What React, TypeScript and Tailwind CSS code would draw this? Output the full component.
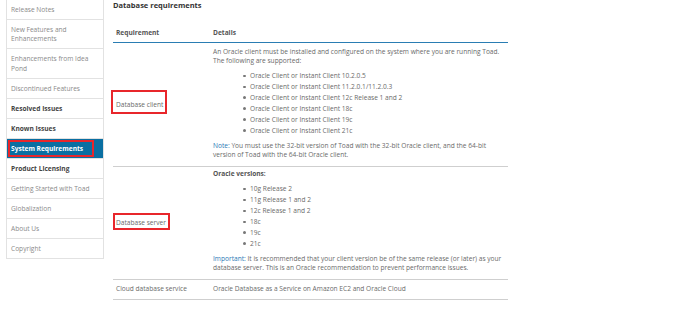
import React from "react";

const sidebar: { label: string; kind: "normal" | "bold" | "active" }[] = [
  { label: "Release Notes", kind: "normal" },
  { label: "New Features and Enhancements", kind: "normal" },
  { label: "Enhancements from Idea Pond", kind: "normal" },
  { label: "Discontinued Features", kind: "normal" },
  { label: "Resolved Issues", kind: "bold" },
  { label: "Known Issues", kind: "bold" },
  { label: "System Requirements", kind: "active" },
  { label: "Product Licensing", kind: "bold" },
  { label: "Getting Started with Toad", kind: "normal" },
  { label: "Globalization", kind: "normal" },
  { label: "About Us", kind: "normal" },
  { label: "Copyright", kind: "normal" },
];

const clientItems = [
  "Oracle Client or Instant Client 10.2.0.5",
  "Oracle Client or Instant Client 11.2.0.1/11.2.0.3",
  "Oracle Client or Instant Client 12c Release 1 and 2",
  "Oracle Client or Instant Client 18c",
  "Oracle Client or Instant Client 19c",
  "Oracle Client or Instant Client 21c",
];

const serverItems = ["10g Release 2", "11g Release 1 and 2", "12c Release 1 and 2", "18c", "19c", "21c"];

function Bullets({ items }: { items: string[] }) {
  return (
    <ul className="flex flex-col gap-[1.5px] pl-[30px]">
      {items.map((t) => (
        <li key={t} className="flex items-center">
          <span className="w-[2.5px] h-[2.5px] rounded-full bg-[#777] mr-[4.5px] shrink-0" />
          <span>{t}</span>
        </li>
      ))}
    </ul>
  );
}

export default function App() {
  return (
    <div className="w-[680px] h-[314px] bg-white overflow-hidden flex font-['Open_Sans',sans-serif] text-[6.6px] leading-[9.4px] text-[#6a6a6a]">
      <aside className="ml-[6px] w-[98px] shrink-0">
        <ul className="border-x border-[#e2e2e2]">
          {sidebar.map((s) => (
            <li
              key={s.label}
              className={
                s.kind === "active"
                  ? "relative px-[4px] py-[4.8px] border-b border-[#e2e2e2] bg-[#0a6fa2] text-white font-bold"
                  : s.kind === "bold"
                  ? "px-[4px] py-[4.8px] border-b border-[#e2e2e2] text-[#444] font-bold"
                  : "px-[4px] py-[4.8px] border-b border-[#e2e2e2] text-[#8a8a8a]"
              }
            >
              {s.label}
              {s.kind === "active" && (
                <span className="absolute left-[1px] top-[1px] w-[86px] h-[17px] border-2 border-solid border-[#e8262b]" />
              )}
            </li>
          ))}
        </ul>
      </aside>

      <main className="ml-[9px] w-[395px] shrink-0">
        <h1 className="text-[7.5px] leading-[10px] font-bold text-[#333]">Database requirements</h1>

        <div className="mt-[18px] flex pb-[5px] border-b-[1.5px] border-[#2a7db3] font-bold text-[#555]">
          <div className="w-[97px] pl-[3px]">Requirement</div>
          <div className="pl-[3px]">Details</div>
        </div>

        <div className="flex border-b border-[#cfcfcf]">
          <div className="w-[97px] pl-[3px] flex items-center">
            <span className="relative">
              Database client
              <span className="absolute left-[-5px] top-[-10px] w-[56px] h-[24px] border-2 border-solid border-[#e8262b]" />
            </span>
          </div>
          <div className="flex-1 pl-[3px] pt-[3.5px] pb-[6.5px] flex flex-col gap-[5.5px]">
            <p>
              An Oracle client must be installed and configured on the system where you are running Toad.
              <br />
              The following are supported:
            </p>
            <Bullets items={clientItems} />
            <p>
              <span className="text-[#1f78b6]">Note:</span> You must use the 32-bit version of Toad with the 32-bit
              Oracle client, and the 64-bit
              <br />
              version of Toad with the 64-bit Oracle client.
            </p>
          </div>
        </div>

        <div className="flex border-b border-[#cfcfcf]">
          <div className="w-[97px] pl-[3px] flex items-center">
            <span className="relative">
              Database server
              <span className="absolute left-[-3px] top-[-5px] w-[57px] h-[17px] border-2 border-solid border-[#e8262b]" />
            </span>
          </div>
          <div className="flex-1 pl-[3px] pt-[2.5px] pb-[6px] flex flex-col gap-[5.5px]">
            <p className="font-bold text-[#555]">Oracle versions:</p>
            <Bullets items={serverItems} />
            <p>
              <span className="text-[#1f78b6]">Important:</span> It is recommended that your client version be of the
              same release (or later) as your
              <br />
              database server. This is an Oracle recommendation to prevent performance issues.
            </p>
          </div>
        </div>

        <div className="flex border-b border-[#cfcfcf] pt-[4px] pb-[5.5px]">
          <div className="w-[97px] pl-[3px]">Cloud database service</div>
          <div className="flex-1 pl-[3px]">Oracle Database as a Service on Amazon EC2 and Oracle Cloud</div>
        </div>
      </main>
    </div>
  );
}
